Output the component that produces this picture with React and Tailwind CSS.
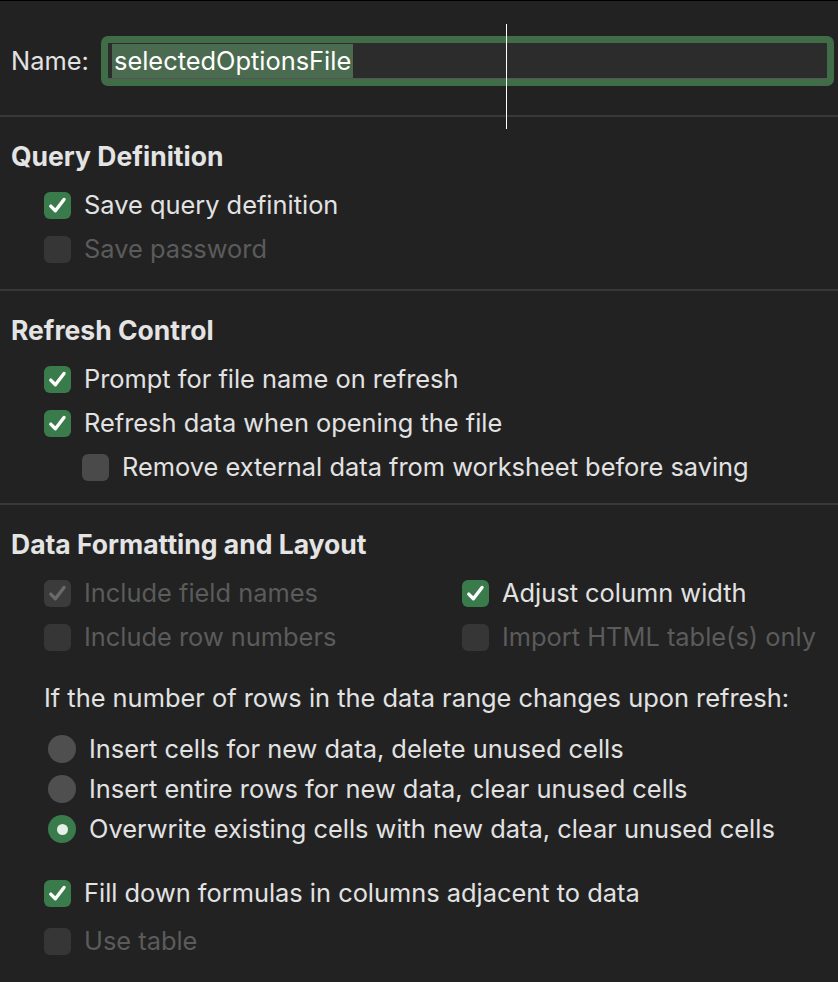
import React from 'react';

// Dark options sheet: name field, query, refresh and layout settings.
function Check({ checked, disabled }) {
  const box = checked
    ? disabled
      ? 'bg-[#3b3b3b]'
      : 'bg-[#3a7b4b]'
    : disabled
      ? 'bg-[#363636]'
      : 'bg-[#4a4a4a]';
  return (
    <span className={`flex h-[27px] w-[27px] shrink-0 items-center justify-center rounded-[6px] ${box}`}>
      {checked && (
        <svg width="21" height="21" viewBox="0 0 20 20" fill="none">
          <path
            d="M3.6 10.6 L8 15 L16.2 4.2"
            stroke={disabled ? '#6a6a6a' : '#ffffff'}
            strokeWidth="3.2"
            strokeLinecap="round"
            strokeLinejoin="round"
          />
        </svg>
      )}
    </span>
  );
}

function CheckRow({ label, checked, disabled, indent = 'pl-[44px]' }) {
  return (
    <div className={`flex h-[44px] items-center gap-[13px] ${indent}`}>
      <Check checked={checked} disabled={disabled} />
      <span className={disabled ? 'text-[#5b5b5b]' : 'text-[#e2e2e2]'}>{label}</span>
    </div>
  );
}

function Radio({ label, on }) {
  return (
    <div className="flex h-[40px] items-center gap-[13px] pl-[48px]">
      <span
        className={`flex h-[28px] w-[28px] shrink-0 items-center justify-center rounded-full ${
          on ? 'bg-[#3a7b4b]' : 'bg-[#4f4f4f]'
        }`}
      >
        {on && <span className="h-[11px] w-[11px] rounded-full bg-[#e6f0e8]" />}
      </span>
      <span className="text-[#e2e2e2]">{label}</span>
    </div>
  );
}

function Heading({ children }) {
  return (
    <div className="flex h-[44px] items-center pl-[11px] text-[26.5px] font-bold text-[#e4e4e4]">{children}</div>
  );
}

export default function App() {
  return (
    <div className="relative min-h-screen border-t border-black bg-[#222222] text-[25.4px] text-[#e2e2e2] [font-family:Inter,'Noto_Sans',sans-serif]">
      <div className="flex items-center pl-[11px] pr-[4px] pt-[35px] pb-[29px]">
        <span className="w-[90px] shrink-0">Name:</span>
        <div className="flex h-[50px] flex-1 items-stretch rounded-[7px] bg-[#416c48] p-[7px]">
          <div className="flex flex-1 items-center border-b border-[#555] bg-[#2c2c2c] pl-[4px]">
            <span className="bg-[#4b6b50] px-[2px] leading-[34px] text-white">selectedOptionsFile</span>
          </div>
        </div>
      </div>
      <div className="absolute left-[506px] top-[23px] h-[105px] w-px bg-white" />

      <div className="h-[2px] bg-[#383838]" />
      <section className="pt-[18px] pb-[18px]">
        <Heading>Query Definition</Heading>
        <div className="mt-[4px]">
          <CheckRow label="Save query definition" checked />
          <CheckRow label="Save password" disabled />
        </div>
      </section>

      <div className="h-[2px] bg-[#383838]" />
      <section className="pt-[18px] pb-[14px]">
        <Heading>Refresh Control</Heading>
        <div className="mt-[4px]">
          <CheckRow label="Prompt for file name on refresh" checked />
          <CheckRow label="Refresh data when opening the file" checked />
          <CheckRow label="Remove external data from worksheet before saving" indent="pl-[82px]" />
        </div>
      </section>

      <div className="h-[2px] bg-[#383838]" />
      <section className="pt-[18px] pb-[30px]">
        <Heading>Data Formatting and Layout</Heading>
        <div className="mt-[4px] grid grid-cols-[462px_1fr]">
          <CheckRow label="Include field names" checked disabled />
          <CheckRow label="Adjust column width" checked indent="pl-0" />
          <CheckRow label="Include row numbers" disabled />
          <CheckRow label="Import HTML table(s) only" disabled indent="pl-0" />
        </div>
        <div className="mt-[17px] flex h-[44px] items-center pl-[44px]">
          If the number of rows in the data range changes upon refresh:
        </div>
        <div className="mt-[9px]">
          <Radio label="Insert cells for new data, delete unused cells" />
          <Radio label="Insert entire rows for new data, clear unused cells" />
          <Radio label="Overwrite existing cells with new data, clear unused cells" on />
        </div>
        <div className="mt-[22px]">
          <CheckRow label="Fill down formulas in columns adjacent to data" checked />
          <div className="mt-[4px]">
            <CheckRow label="Use table" disabled />
          </div>
        </div>
      </section>
    </div>
  );
}
